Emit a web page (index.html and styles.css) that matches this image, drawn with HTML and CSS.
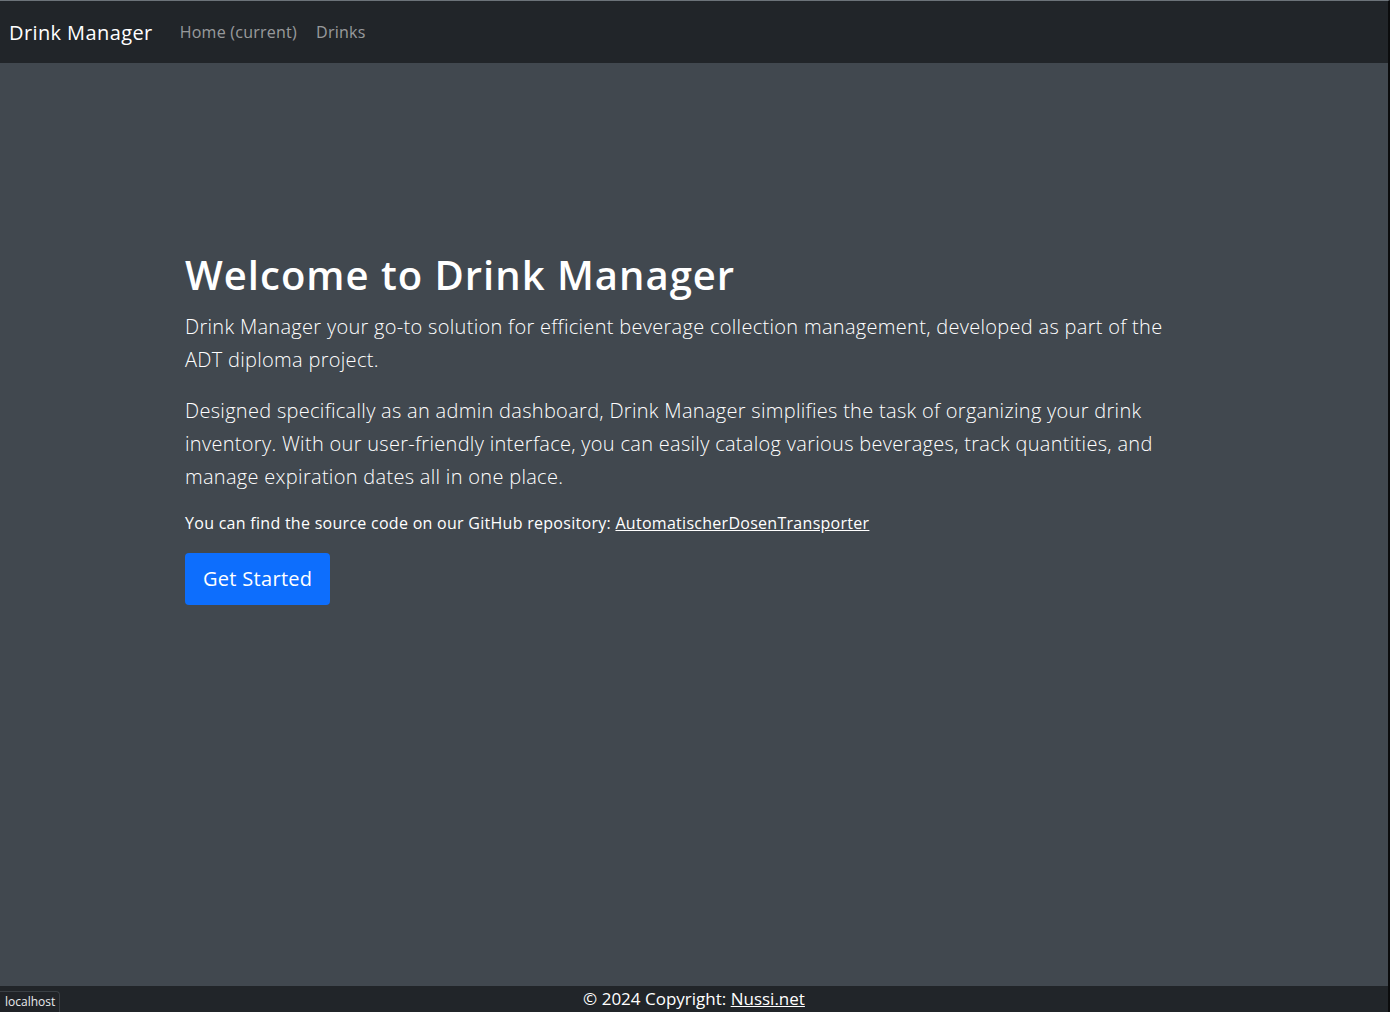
FILE: index.html
```html
<!DOCTYPE html>
<html lang="en">
<head>
<meta charset="utf-8">
<title>Drink Manager</title>
<link rel="stylesheet" href="styles.css">
</head>
<body>
<div class="page">
  <nav class="navbar">
    <a class="brand" href="#">Drink Manager</a>
    <ul class="nav-links">
      <li><a href="#">Home (current)</a></li>
      <li><a href="#">Drinks</a></li>
    </ul>
  </nav>
  <main class="main">
    <div class="container">
      <div class="hero">
        <h1 class="title">Welcome to Drink Manager</h1>
        <p class="lead">Drink Manager your go-to solution for efficient beverage collection management, developed as part of the ADT diploma project.</p>
        <p class="lead">Designed specifically as an admin dashboard, Drink Manager simplifies the task of organizing your drink inventory. With our user-friendly interface, you can easily catalog various beverages, track quantities, and manage expiration dates all in one place.</p>
        <p class="source">You can find the source code on our GitHub repository: <a href="#">AutomatischerDosenTransporter</a></p>
        <a class="btn" href="#">Get Started</a>
      </div>
    </div>
  </main>
  <footer class="footer">© 2024 Copyright: <a href="#">Nussi.net</a></footer>
</div>
<div class="status">localhost</div>
</body>
</html>
```
FILE: styles.css
```css
* { box-sizing: border-box; }
html, body { height: 100%; }
body {
  margin: 0;
  background: #41484f;
  color: #fff;
  font-family: "Open Sans", "Noto Sans", "Liberation Sans", sans-serif;
  border-top: 1px solid #6c7379;
  border-right: 2px solid #0b0c0d;
}
.page {
  min-height: 100%;
  display: flex;
  flex-direction: column;
}
.navbar {
  height: 62px;
  background: #212529;
  display: flex;
  align-items: center;
  padding: 0 9px;
}
.brand {
  color: #fff;
  text-decoration: none;
  font-size: 20px;
  letter-spacing: 0.4px;
  margin-right: 27px;
}
.nav-links {
  list-style: none;
  display: flex;
  gap: 19px;
  margin: 0;
  padding: 0;
}
.nav-links a {
  color: rgba(255,255,255,.55);
  text-decoration: none;
  font-size: 16px;
  letter-spacing: 0.25px;
}
.main { flex: 1; }
.container {
  max-width: 1140px;
  margin: 0 auto;
  padding: 0 12px;
}
.hero {
  padding: 188px 48px 0 49px;
}
.title {
  margin: 0 0 11px;
  font-size: 40px;
  font-weight: 600;
  line-height: 48px;
  letter-spacing: 1px;
}
.lead {
  margin: 0 0 18px;
  font-size: 20px;
  font-weight: 300;
  line-height: 33px;
  letter-spacing: 0.3px;
}
.source {
  margin: 0 0 18px;
  font-size: 16px;
  line-height: 24px;
  letter-spacing: 0.28px;
}
.source a { color: #fff; }
.btn {
  display: inline-block;
  background: #0d6efd;
  color: #fff;
  text-decoration: none;
  font-size: 20px;
  line-height: 30px;
  letter-spacing: 0.3px;
  padding: 11px 18px;
  border-radius: 4px;
}
.footer {
  height: 26px;
  background: #212529;
  text-align: center;
  font-size: 17px;
  line-height: 26px;
}
.footer a { color: #fff; }
.status {
  position: fixed;
  left: 0;
  bottom: 0;
  background: #202327;
  color: #e8eaed;
  font-size: 12px;
  line-height: 20px;
  padding: 0 4px 0 5px;
  border-top: 1px solid #3a3f44;
  border-right: 1px solid #3a3f44;
  border-top-right-radius: 4px;
}
```
